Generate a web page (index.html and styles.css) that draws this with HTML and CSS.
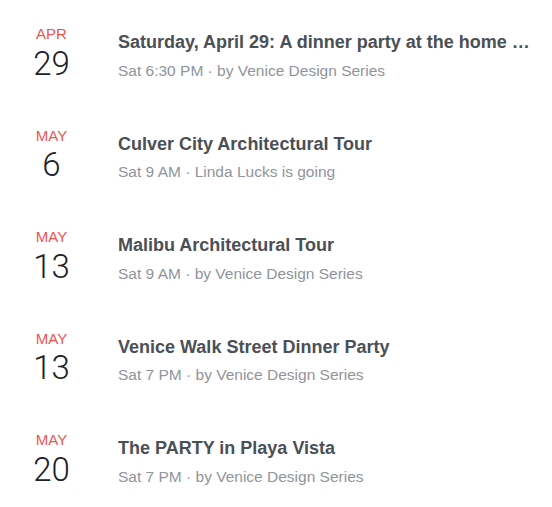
FILE: index.html
```html
<!DOCTYPE html>
<html lang="en">
<head>
<meta charset="utf-8">
<title>Upcoming Events</title>
<link rel="stylesheet" href="styles.css">
</head>
<body>
<ul class="events">
  <li class="event">
    <div class="date"><span class="month">APR</span><span class="day">29</span></div>
    <div class="info">
      <div class="title">Saturday, April 29: A dinner party at the home …</div>
      <div class="meta">Sat 6:30 PM · by Venice Design Series</div>
    </div>
  </li>
  <li class="event">
    <div class="date"><span class="month">MAY</span><span class="day">6</span></div>
    <div class="info">
      <div class="title">Culver City Architectural Tour</div>
      <div class="meta">Sat 9 AM · Linda Lucks is going</div>
    </div>
  </li>
  <li class="event">
    <div class="date"><span class="month">MAY</span><span class="day">13</span></div>
    <div class="info">
      <div class="title">Malibu Architectural Tour</div>
      <div class="meta">Sat 9 AM · by Venice Design Series</div>
    </div>
  </li>
  <li class="event">
    <div class="date"><span class="month">MAY</span><span class="day">13</span></div>
    <div class="info">
      <div class="title">Venice Walk Street Dinner Party</div>
      <div class="meta">Sat 7 PM · by Venice Design Series</div>
    </div>
  </li>
  <li class="event">
    <div class="date"><span class="month">MAY</span><span class="day">20</span></div>
    <div class="info">
      <div class="title">The PARTY in Playa Vista</div>
      <div class="meta">Sat 7 PM · by Venice Design Series</div>
    </div>
  </li>
</ul>
</body>
</html>
```
FILE: styles.css
```css
html, body {
  margin: 0;
  padding: 0;
  background: #ffffff;
}

body {
  font-family: "Liberation Sans", Arial, sans-serif;
}

.events {
  list-style: none;
  margin: 0;
  padding: 25px 18px 0 18px;
}

.event {
  display: flex;
  align-items: flex-start;
  gap: 33px;
  height: 101.5px;
}

.event:last-child {
  height: auto;
}

.date {
  width: 67px;
  flex: none;
  display: flex;
  flex-direction: column;
  align-items: center;
}

.month {
  font-size: 15px;
  line-height: 18px;
  color: #f2534d;
}

.day {
  margin-top: 2.7px;
  font-family: Roboto, "Liberation Sans", sans-serif;
  font-weight: 300;
  font-size: 33px;
  line-height: 36px;
  color: #1d2129;
}

.info {
  flex: 1;
  min-width: 0;
  padding-top: 7.3px;
}

.title {
  font-size: 18px;
  line-height: 20px;
  font-weight: bold;
  color: #4b4f56;
  white-space: nowrap;
  overflow: hidden;
}

.meta {
  margin-top: 8.3px;
  font-size: 15.5px;
  line-height: 20px;
  color: #90949c;
}
```
